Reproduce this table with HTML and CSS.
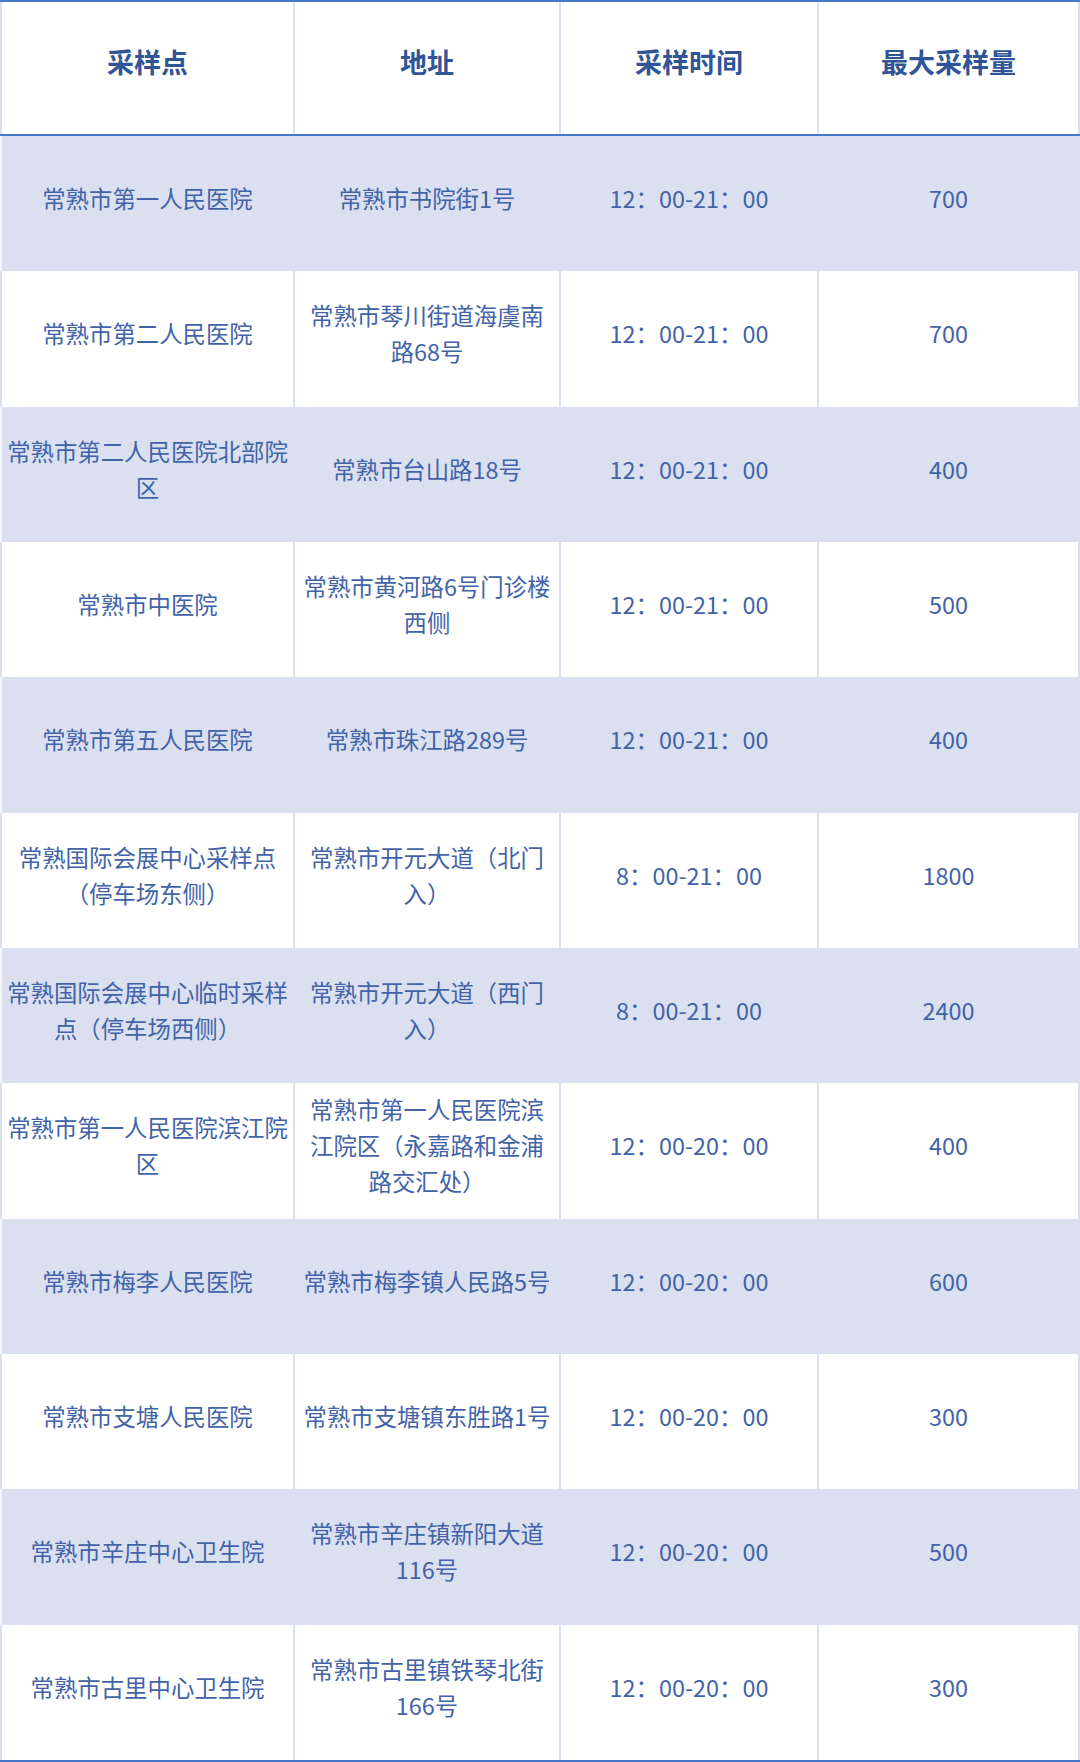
FILE: index.html
```html
<!DOCTYPE html>
<html lang="zh-CN">
<head>
<meta charset="utf-8">
<title>采样点</title>
<link rel="stylesheet" href="styles.css">
</head>
<body>
<div class="table">
  <div class="row head">
    <div class="cell">采样点</div>
    <div class="cell">地址</div>
    <div class="cell">采样时间</div>
    <div class="cell">最大采样量</div>
  </div>
  <div class="row shade">
    <div class="cell">常熟市第一人民医院</div>
    <div class="cell">常熟市书院街1号</div>
    <div class="cell">12：00-21：00</div>
    <div class="cell">700</div>
  </div>
  <div class="row">
    <div class="cell">常熟市第二人民医院</div>
    <div class="cell">常熟市琴川街道海虞南路68号</div>
    <div class="cell">12：00-21：00</div>
    <div class="cell">700</div>
  </div>
  <div class="row shade">
    <div class="cell">常熟市第二人民医院北部院区</div>
    <div class="cell">常熟市台山路18号</div>
    <div class="cell">12：00-21：00</div>
    <div class="cell">400</div>
  </div>
  <div class="row">
    <div class="cell">常熟市中医院</div>
    <div class="cell">常熟市黄河路6号门诊楼西侧</div>
    <div class="cell">12：00-21：00</div>
    <div class="cell">500</div>
  </div>
  <div class="row shade">
    <div class="cell">常熟市第五人民医院</div>
    <div class="cell">常熟市珠江路289号</div>
    <div class="cell">12：00-21：00</div>
    <div class="cell">400</div>
  </div>
  <div class="row">
    <div class="cell">常熟国际会展中心采样点（停车场东侧）</div>
    <div class="cell">常熟市开元大道（北门入）</div>
    <div class="cell">8：00-21：00</div>
    <div class="cell">1800</div>
  </div>
  <div class="row shade">
    <div class="cell">常熟国际会展中心临时采样点（停车场西侧）</div>
    <div class="cell">常熟市开元大道（西门入）</div>
    <div class="cell">8：00-21：00</div>
    <div class="cell">2400</div>
  </div>
  <div class="row">
    <div class="cell">常熟市第一人民医院滨江院区</div>
    <div class="cell">常熟市第一人民医院滨江院区（永嘉路和金浦路交汇处）</div>
    <div class="cell">12：00-20：00</div>
    <div class="cell">400</div>
  </div>
  <div class="row shade">
    <div class="cell">常熟市梅李人民医院</div>
    <div class="cell">常熟市梅李镇人民路5号</div>
    <div class="cell">12：00-20：00</div>
    <div class="cell">600</div>
  </div>
  <div class="row">
    <div class="cell">常熟市支塘人民医院</div>
    <div class="cell">常熟市支塘镇东胜路1号</div>
    <div class="cell">12：00-20：00</div>
    <div class="cell">300</div>
  </div>
  <div class="row shade">
    <div class="cell">常熟市辛庄中心卫生院</div>
    <div class="cell">常熟市辛庄镇新阳大道116号</div>
    <div class="cell">12：00-20：00</div>
    <div class="cell">500</div>
  </div>
  <div class="row last">
    <div class="cell">常熟市古里中心卫生院</div>
    <div class="cell">常熟市古里镇铁琴北街166号</div>
    <div class="cell">12：00-20：00</div>
    <div class="cell">300</div>
  </div>
</div>
</body>
</html>
```
FILE: styles.css
```css
html, body {
  margin: 0;
  padding: 0;
  background: #ffffff;
}

body {
  font-family: "Noto Sans CJK SC", "Noto Sans", sans-serif;
  color: #4263a8;
}

.table {
  width: 1080px;
  display: flex;
  flex-direction: column;
}

.row {
  display: grid;
  grid-template-columns: 293px 266px 258px 263px;
  height: 135.33px;
  box-sizing: border-box;
}

.row.head {
  height: 136px;
  border-top: 2px solid #4676c8;
  border-bottom: 2px solid #4676c8;
}

.row.last {
  height: 137.33px;
  border-bottom: 2px solid #4676c8;
}

.row.shade {
  background: #dae0f0;
}

.cell {
  box-sizing: border-box;
  display: flex;
  align-items: center;
  justify-content: center;
  text-align: center;
  border-left: 2px solid #dae0f0;
  padding: 0 4px 11px;
  font-size: 23.4px;
  font-weight: 400;
  line-height: 36px;
}

.cell:nth-child(2) {
  padding-left: 6px;
  padding-right: 6px;
}

.cell:last-child {
  border-right: 2px solid #dae0f0;
}

.row.shade .cell:first-child {
  border-left-color: #f4f6fb;
}

.row.head .cell {
  font-size: 27px;
  font-weight: 700;
  color: #2f5597;
  padding-bottom: 12px;
}
```
